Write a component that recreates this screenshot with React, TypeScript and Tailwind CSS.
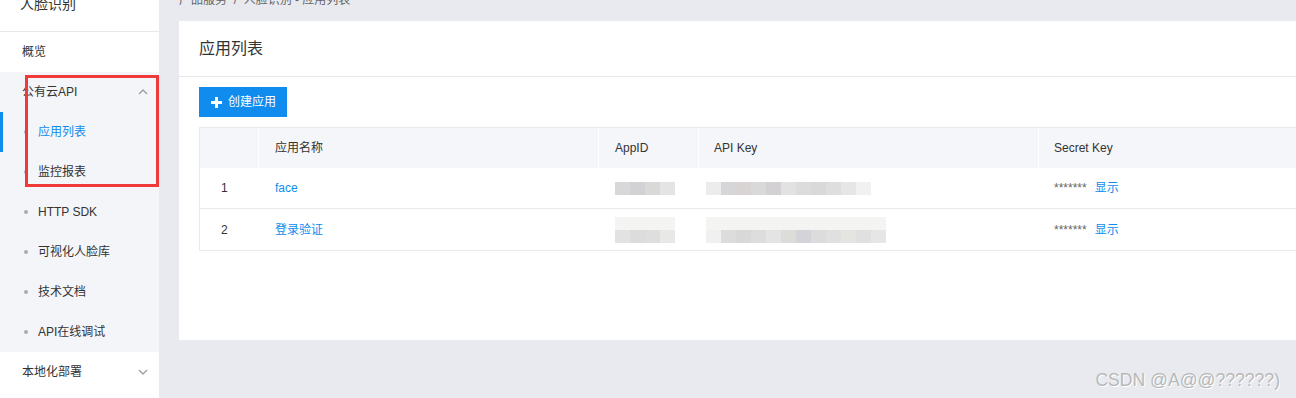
import React from 'react';

const font = { fontFamily: '"Liberation Sans", "Noto Sans CJK SC", sans-serif' };

const subItems = [
  { label: '应用列表', active: true },
  { label: '监控报表' },
  { label: 'HTTP SDK' },
  { label: '可视化人脸库' },
  { label: '技术文档' },
  { label: 'API在线调试' },
];

function Chevron({ up }: { up?: boolean }) {
  return (
    <svg width="10" height="6" viewBox="0 0 10 6" className="mr-[11px]">
      <polyline
        points={up ? '1,5 5,1 9,5' : '1,1 5,5 9,1'}
        fill="none"
        stroke="#9aa0a8"
        strokeWidth="1.4" />
    </svg>
  );
}

// pixelated grey blocks standing in for the blurred keys
function Blur({ cells, rows = 1 }: { cells: string[]; rows?: number }) {
  return (
    <div className="flex flex-col">
      {Array.from({ length: rows }).map((_, r) => (
        <div key={r} className="flex">
          {cells.map((c, i) => (
            <div key={i} className="w-[15px] h-[13px]" style={{ background: r === 0 && rows > 1 ? '#f4f4f3' : c }} />
          ))}
        </div>
      ))}
    </div>
  );
}

function Sidebar() {
  return (
    <aside className="w-[159px] shrink-0 bg-white text-[12px] text-[#333]">
      <div className="h-[32px] flex flex-col border-b border-[#e6e8ec] pl-[20px]">
        <div className="-mt-[6px] text-[14px] leading-[20px] text-[#333]">人脸识别</div>
      </div>
      <div className="h-[40px] flex items-center pl-[22px]">概览</div>
      <div className="bg-[#f4f5f9]">
        <div className="h-[40px] flex items-center justify-between pl-[22px]">
          <span>公有云API</span>
          <Chevron up />
        </div>
        {subItems.map((it) => (
          <div key={it.label} className="relative h-[40px] flex items-center pl-[24px]">
            {it.active && <div className="absolute left-0 top-0 h-[40px] w-[3px] bg-[#108cee]" />}
            <span className="w-[4px] h-[4px] rounded-full bg-[#a8acb2] mr-[10px]" />
            <span className={it.active ? 'text-[#108cee]' : 'text-[#333]'}>{it.label}</span>
          </div>
        ))}
      </div>
      <div className="h-[40px] flex items-center justify-between pl-[22px]">
        <span>本地化部署</span>
        <Chevron />
      </div>
    </aside>
  );
}

const cols = [
  { title: '', w: 'w-[58px]', pad: 'pl-[21px]' },
  { title: '应用名称', w: 'w-[340px]', pad: 'pl-[16px]' },
  { title: 'AppID', w: 'w-[100px]', pad: 'pl-[16px]' },
  { title: 'API Key', w: 'w-[340px]', pad: 'pl-[15px]' },
  { title: 'Secret Key', w: 'w-[300px]', pad: 'pl-[15px]' },
];

const rows = [
  { idx: '1', name: 'face' },
  { idx: '2', name: '登录验证' },
];

function Table() {
  return (
    <div className="w-[1150px] border border-[#e8eaee] text-[12px] text-[#333]">
      <div className="flex h-[40px] bg-[#f5f6fa]">
        {cols.map((c, i) => (
          <div key={i} className={`${c.w} ${c.pad} shrink-0 flex items-center ${i > 0 ? 'border-l border-white' : ''}`}>
            {c.title}
          </div>
        ))}
      </div>
      {rows.map((r, ri) => (
        <div key={r.idx} className={`flex h-[41px] ${ri === 0 ? 'border-b border-[#e8eaee]' : ''}`}>
          <div className="w-[58px] shrink-0 pl-[21px] flex items-center">{r.idx}</div>
          <div className="w-[340px] shrink-0 pl-[17px] flex items-center text-[#108cee]">{r.name}</div>
          <div className="w-[100px] shrink-0 pl-[17px] flex items-center">
            {ri === 0 ? (
              <Blur cells={['#d8d8d8', '#d2d2d4', '#d9d9d8', '#e4e4e5']} />
            ) : (
              <Blur cells={['#e2e2e2', '#dcdcdc', '#dedede', '#e8e8e6']} rows={2} />
            )}
          </div>
          <div className="w-[340px] shrink-0 pl-[8px] flex items-center">
            {ri === 0 ? (
              <Blur cells={['#ececec', '#d6d6d8', '#d8d4d4', '#d9d9d9', '#d3d1d4', '#e2e2e2', '#dcdcdc', '#d9d9d9', '#dedede', '#e6e6e6', '#f1f1f1']} />
            ) : (
              <Blur cells={['#f0f0f0', '#dcdcdc', '#d8d8d8', '#dddddd', '#e4e4e4', '#dcdcd8', '#d4d4d8', '#dcdcdc', '#e0e0e0', '#e4e4e0', '#e0e0e0', '#e6e6e6']} rows={2} />
            )}
          </div>
          <div className="pl-[16px] flex items-center gap-[8px]">
            <span className="text-[#666]">*******</span>
            <span className="text-[#108cee]">显示</span>
          </div>
        </div>
      ))}
    </div>
  );
}

export default function App() {
  return (
    <div className="relative w-[1296px] h-[398px] overflow-hidden flex bg-[#e8eaef]" style={font}>
      <Sidebar />
      <main className="flex-1 min-w-0 pl-[20px]">
        <div className="-mt-[10px] h-[31px] leading-[20px] text-[12px] text-[#666]">
          产品服务&nbsp;&nbsp;/&nbsp;&nbsp;人脸识别 - 应用列表
        </div>
        <div className="w-[1200px] h-[319px] bg-white">
          <div className="h-[56px] border-b border-[#e6e8ec] pl-[20px] flex items-center text-[16px] text-[#333]">
            应用列表
          </div>
          <div className="px-[20px] pt-[10px]">
            <button className="h-[30px] w-[88px] bg-[#108cee] text-white text-[12px] flex items-center pl-[12px] gap-[6px]">
              <svg width="11" height="11" viewBox="0 0 11 11">
                <rect x="4" y="0" width="3" height="11" fill="white" />
                <rect x="0" y="4" width="11" height="3" fill="white" />
              </svg>
              创建应用
            </button>
            <div className="mt-[10px]">
              <Table />
            </div>
          </div>
        </div>
      </main>

      {/* red annotation box */}
      <div className="absolute left-[25px] top-[75px] w-[134px] h-[112px] border-[3px] border-[#f03a3a]" />

      {/* watermark */}
      <div className="absolute right-[16px] top-[367px] text-[17.6px] text-[#b8b8b8] [text-shadow:1px_1px_0_#fff]">
        CSDN @A@@??????)
      </div>
    </div>
  );
}
